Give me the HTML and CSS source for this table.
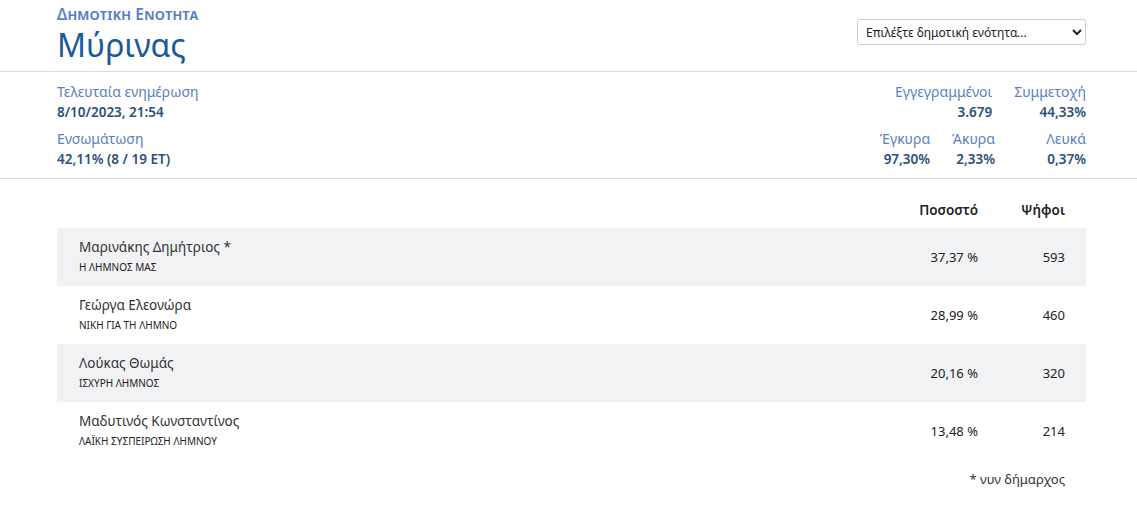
FILE: index.html
```html
<!DOCTYPE html>
<html lang="el">
<head>
    <meta charset="UTF-8">
    <meta name="viewport" content="width=device-width, initial-scale=1.0">
    <link rel="stylesheet" href="styles.css">
</head>
<body>

<header class="top">
    <div class="wrap top-inner">
        <div class="title-box">
            <div class="kicker">Δημοτική Ενότητα</div>
            <h1 class="title">Μύρινας</h1>
        </div>
        <select class="picker">
            <option>Επιλέξτε δημοτική ενότητα...</option>
        </select>
    </div>
</header>

<section class="stats">
    <div class="wrap stats-inner">
        <div class="stats-left">
            <div class="stat">
                <div class="stat-label">Τελευταία ενημέρωση</div>
                <div class="stat-value">8/10/2023, 21:54</div>
            </div>
            <div class="stat">
                <div class="stat-label">Ενσωμάτωση</div>
                <div class="stat-value">42,11% (8 / 19 ΕΤ)</div>
            </div>
        </div>
        <div class="stats-right">
            <div class="stat-row">
                <div class="stat">
                    <div class="stat-label">Εγγεγραμμένοι</div>
                    <div class="stat-value">3.679</div>
                </div>
                <div class="stat last">
                    <div class="stat-label">Συμμετοχή</div>
                    <div class="stat-value">44,33%</div>
                </div>
            </div>
            <div class="stat-row">
                <div class="stat">
                    <div class="stat-label">Έγκυρα</div>
                    <div class="stat-value">97,30%</div>
                </div>
                <div class="stat">
                    <div class="stat-label">Άκυρα</div>
                    <div class="stat-value">2,33%</div>
                </div>
                <div class="stat last">
                    <div class="stat-label">Λευκά</div>
                    <div class="stat-value">0,37%</div>
                </div>
            </div>
        </div>
    </div>
</section>

<main class="wrap results">
    <div class="row head">
        <div></div>
        <div class="num">Ποσοστό</div>
        <div class="num">Ψήφοι</div>
    </div>
    <div class="row cand">
        <div>
            <div class="name">Μαρινάκης Δημήτριος *</div>
            <div class="party">Η ΛΗΜΝΟΣ ΜΑΣ</div>
        </div>
        <div class="num">37,37 %</div>
        <div class="num">593</div>
    </div>
    <div class="row cand">
        <div>
            <div class="name">Γεώργα Ελεονώρα</div>
            <div class="party">ΝΙΚΗ ΓΙΑ ΤΗ ΛΗΜΝΟ</div>
        </div>
        <div class="num">28,99 %</div>
        <div class="num">460</div>
    </div>
    <div class="row cand">
        <div>
            <div class="name">Λούκας Θωμάς</div>
            <div class="party">ΙΣΧΥΡΗ ΛΗΜΝΟΣ</div>
        </div>
        <div class="num">20,16 %</div>
        <div class="num">320</div>
    </div>
    <div class="row cand">
        <div>
            <div class="name">Μαδυτινός Κωνσταντίνος</div>
            <div class="party">ΛΑΪΚΗ ΣΥΣΠΕΙΡΩΣΗ ΛΗΜΝΟΥ</div>
        </div>
        <div class="num">13,48 %</div>
        <div class="num">214</div>
    </div>
    <div class="note">* νυν δήμαρχος</div>
</main>

</body>
</html>
```

FILE: styles.css
```css
body {
    margin: 0;
    font-family: 'Noto Sans', 'Open Sans', sans-serif;
    color: #222;
    background: #fff;
}

.wrap {
    margin: 0 51px 0 57px;
}

/* Cabecera */
.top {
    border-bottom: 1px solid #dcdcdc;
}

.top-inner {
    display: flex;
    justify-content: space-between;
    align-items: flex-start;
    padding: 4px 0 7px;
}

.kicker {
    font-variant: small-caps;
    font-weight: 600;
    font-size: 15.5px;
    line-height: 20px;
    color: #5b7ec6;
    letter-spacing: 0.2px;
}

.title {
    margin: 2px 0 0;
    font-weight: 400;
    font-size: 32px;
    line-height: 38px;
    color: #1a5a9b;
}

.picker {
    margin-top: 15px;
    width: 229px;
    height: 26px;
    font-family: 'Noto Sans', sans-serif;
    font-size: 12px;
    color: #222;
    background: #fff;
    border: 1px solid #ccc;
    border-radius: 3px;
    padding: 0 4px;
}

/* Estadisticas */
.stats {
    border-bottom: 1px solid #dcdcdc;
}

.stats-inner {
    display: flex;
    justify-content: space-between;
    padding: 10px 0 2px;
}

.stats-left,
.stats-right {
    display: flex;
    flex-direction: column;
}

.stat-row {
    display: flex;
    justify-content: flex-end;
    gap: 22px;
}

.stats-right .stat {
    text-align: right;
}

.stat.last {
    min-width: 69px;
}

.stat {
    height: 47px;
}

.stat-label {
    font-size: 14px;
    line-height: 20px;
    color: #5c7ec4;
}

.stat-value {
    font-size: 13.5px;
    line-height: 20px;
    font-weight: 600;
    color: #2b4e7a;
}

/* Resultados */
.results {
    padding-top: 13px;
}

.row {
    display: grid;
    grid-template-columns: 1fr 120px 87px;
    align-items: center;
    padding: 0 21px 0 22px;
}

.row.head {
    height: 36px;
    font-size: 13.5px;
    font-weight: 600;
    color: #222;
}

.cand {
    height: 58px;
    font-size: 13px;
}

.cand:nth-child(even) {
    background: #f1f2f4;
}

.num {
    text-align: right;
}

.name {
    font-size: 13.5px;
    line-height: 20px;
    color: #333;
}

.party {
    font-size: 10px;
    line-height: 20px;
    color: #222;
}

.note {
    text-align: right;
    padding: 10px 21px 0 0;
    font-size: 13px;
    color: #333;
}
```
